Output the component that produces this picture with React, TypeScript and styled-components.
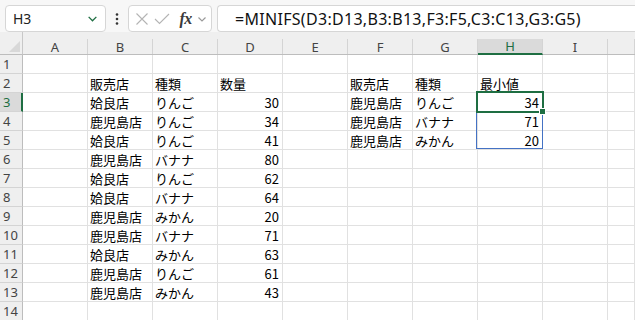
import React, { FC } from 'react';
import styled, { createGlobalStyle, css } from 'styled-components';

const GlobalStyle = createGlobalStyle`
  html, body {
    margin: 0;
    padding: 0;
    background: #ffffff;
    overflow: hidden;
  }
`;

const CELL_FONT = `"Noto Sans CJK JP", "Noto Sans", sans-serif`;
const UI_FONT = `"Noto Sans", "Liberation Sans", sans-serif`;
const GREEN = '#1e6e42';

const COLS = ['A', 'B', 'C', 'D', 'E', 'F', 'G', 'H', 'I', ''];
const ACTIVE_COL = 'H';
const ACTIVE_ROW = 3;
const SPILL_ROWS = 3;

type Cell = { text: string; num?: boolean };

const data: Record<number, Record<string, Cell>> = {
  2: {
    B: { text: '販売店' }, C: { text: '種類' }, D: { text: '数量' },
    F: { text: '販売店' }, G: { text: '種類' }, H: { text: '最小値' },
  },
  3: {
    B: { text: '姶良店' }, C: { text: 'りんご' }, D: { text: '30', num: true },
    F: { text: '鹿児島店' }, G: { text: 'りんご' }, H: { text: '34', num: true },
  },
  4: {
    B: { text: '鹿児島店' }, C: { text: 'りんご' }, D: { text: '34', num: true },
    F: { text: '鹿児島店' }, G: { text: 'バナナ' }, H: { text: '71', num: true },
  },
  5: {
    B: { text: '姶良店' }, C: { text: 'りんご' }, D: { text: '41', num: true },
    F: { text: '鹿児島店' }, G: { text: 'みかん' }, H: { text: '20', num: true },
  },
  6: { B: { text: '鹿児島店' }, C: { text: 'バナナ' }, D: { text: '80', num: true } },
  7: { B: { text: '姶良店' }, C: { text: 'りんご' }, D: { text: '62', num: true } },
  8: { B: { text: '姶良店' }, C: { text: 'バナナ' }, D: { text: '64', num: true } },
  9: { B: { text: '鹿児島店' }, C: { text: 'みかん' }, D: { text: '20', num: true } },
  10: { B: { text: '鹿児島店' }, C: { text: 'バナナ' }, D: { text: '71', num: true } },
  11: { B: { text: '姶良店' }, C: { text: 'みかん' }, D: { text: '63', num: true } },
  12: { B: { text: '鹿児島店' }, C: { text: 'りんご' }, D: { text: '61', num: true } },
  13: { B: { text: '鹿児島店' }, C: { text: 'みかん' }, D: { text: '43', num: true } },
};

const ROWS = Array.from({ length: 14 }, (_, i) => i + 1);

/* ---------- formula bar ---------- */

const Toolbar = styled.div`
  height: 32px;
  box-sizing: border-box;
  padding: 5px 0 0 5px;
  background: #f7f7f7;
  display: flex;
  align-items: flex-start;
  overflow: hidden;
`;

const Box = styled.div`
  height: 27px;
  box-sizing: border-box;
  background: #ffffff;
  border: 1px solid #d6d6d6;
  border-radius: 4px;
  display: flex;
  align-items: center;
`;

const NameBox = styled(Box)`
  width: 101px;
  padding: 0 7px 0 7px;
  justify-content: space-between;
  font-family: ${UI_FONT};
  font-size: 14px;
  color: #222;
`;

const Dots = styled.div`
  width: 22px;
  height: 27px;
  display: flex;
  align-items: center;
  justify-content: center;
`;

const FxBox = styled(Box)`
  width: 84px;
  padding: 0 4px 0 6px;
  justify-content: space-between;
`;

const FxLabel = styled.span`
  font-family: "Liberation Serif", "DejaVu Serif", serif;
  font-style: italic;
  font-weight: bold;
  font-size: 16px;
  color: #3a3a3a;
  margin-left: 4px;
  letter-spacing: -0.5px;
`;

const FormulaBox = styled(Box)`
  flex: 1;
  margin-left: 5px;
  border-right: none;
  border-radius: 4px 0 0 4px;
  padding-left: 17px;
  font-family: ${UI_FONT};
  font-size: 16px;
  letter-spacing: 0.3px;
  color: #111;
  white-space: nowrap;
`;

const Chevron: FC<{ color: string; size?: number }> = ({ color, size = 10 }) => (
  <svg width={size} height={size} viewBox="0 0 10 10">
    <path d="M1.5 3.5 L5 7 L8.5 3.5" fill="none" stroke={color} strokeWidth="1.2" />
  </svg>
);

/* ---------- sheet ---------- */

const Sheet = styled.div`
  display: grid;
  grid-template-columns: 23px repeat(9, 65px) 1fr;
  grid-template-rows: 23px repeat(14, 19px);
  background: #ffffff;
`;

const Corner = styled.div`
  background: #efefef;
  border-right: 1px solid #c8c8c8;
  border-bottom: 1px solid #bdbdbd;
  display: flex;
  align-items: flex-end;
  justify-content: flex-end;
  padding: 0 2px 2px 0;
`;

const ColHeader = styled.div`
  background: #efefef;
  border-bottom: 1px solid #bdbdbd;
  display: flex;
  align-items: flex-end;
`;

const ColLabel = styled.div<{ $active: boolean }>`
  flex: 1;
  height: 15px;
  box-sizing: border-box;
  border-right: 1px solid #d4d4d4;
  display: flex;
  align-items: center;
  justify-content: center;
  font-family: ${UI_FONT};
  font-size: 13px;
  color: #444;
  ${(p) =>
    p.$active &&
    css`
      background: #dadada;
      color: ${GREEN};
      border-bottom: 2px solid ${GREEN};
      margin-bottom: -1px;
      height: 16px;
    `}
`;

const RowHeader = styled.div<{ $active: boolean }>`
  background: #efefef;
  border-right: 1px solid #bdbdbd;
  border-bottom: 1px solid #d4d4d4;
  box-sizing: border-box;
  display: flex;
  align-items: center;
  padding-left: 3px;
  font-family: ${UI_FONT};
  font-size: 13px;
  color: #444;
  ${(p) =>
    p.$active &&
    css`
      background: #dadada;
      color: ${GREEN};
      border-right: 2px solid ${GREEN};
    `}
`;

const GridCell = styled.div<{ $num?: boolean; $active?: boolean }>`
  border-right: 1px solid #e1e1e1;
  border-bottom: 1px solid #e1e1e1;
  box-sizing: border-box;
  display: flex;
  align-items: center;
  justify-content: ${(p) => (p.$num ? 'flex-end' : 'flex-start')};
  padding: 0 3px 0 2px;
  font-family: ${CELL_FONT};
  font-size: 13px;
  color: #000;
  white-space: nowrap;
  overflow: hidden;
  ${(p) =>
    p.$active &&
    css`
      position: relative;
      overflow: visible;
      z-index: 2;
    `}
`;

/* blue border of the spilled range, drawn over the cells below */
const SpillRange = styled.div<{ $rows: number }>`
  position: absolute;
  left: -2px;
  top: -2px;
  width: 67px;
  height: ${(p) => p.$rows * 19 + 1}px;
  border: 1px solid #4472c4;
  box-sizing: border-box;
  pointer-events: none;
`;

const ActiveFrame = styled.div`
  position: absolute;
  left: -2px;
  top: -2px;
  right: -2px;
  bottom: -2px;
  border: 2px solid ${GREEN};
  pointer-events: none;
`;

const FillHandle = styled.div`
  position: absolute;
  right: -4px;
  bottom: -4px;
  width: 5px;
  height: 5px;
  background: ${GREEN};
  border: 1px solid #ffffff;
`;

export default function App() {
  return (
    <>
      <GlobalStyle />
      <Toolbar>
        <NameBox>
          <span>H3</span>
          <Chevron color={GREEN} size={11} />
        </NameBox>
        <Dots>
          <svg width="4" height="14" viewBox="0 0 4 14">
            <circle cx="2" cy="2.5" r="1.3" fill="#333" />
            <circle cx="2" cy="7" r="1.3" fill="#333" />
            <circle cx="2" cy="11.5" r="1.3" fill="#333" />
          </svg>
        </Dots>
        <FxBox>
          <svg width="14" height="14" viewBox="0 0 14 14">
            <path d="M1.5 1.5 L12.5 12.5 M12.5 1.5 L1.5 12.5" stroke="#b4b4b4" strokeWidth="1.1" fill="none" />
          </svg>
          <svg width="16" height="14" viewBox="0 0 16 14">
            <path d="M1 7 L5.5 11.5 L15 2" stroke="#b4b4b4" strokeWidth="1.1" fill="none" />
          </svg>
          <FxLabel>fx</FxLabel>
          <Chevron color="#9a9a9a" />
        </FxBox>
        <FormulaBox>=MINIFS(D3:D13,B3:B13,F3:F5,C3:C13,G3:G5)</FormulaBox>
      </Toolbar>
      <Sheet>
        <Corner>
          <svg width="11" height="11" viewBox="0 0 11 11">
            <path d="M11 0 L11 11 L0 11 Z" fill="#d8d8d8" />
          </svg>
        </Corner>
        {COLS.map((c, i) => (
          <ColHeader key={`h${i}`}>
            <ColLabel $active={c === ACTIVE_COL}>{c}</ColLabel>
          </ColHeader>
        ))}
        {ROWS.map((r) => (
          <React.Fragment key={r}>
            <RowHeader $active={r === ACTIVE_ROW}>{r}</RowHeader>
            {COLS.map((c, i) => {
              const cell = data[r]?.[c];
              const active = r === ACTIVE_ROW && c === ACTIVE_COL;
              return (
                <GridCell key={`${r}-${i}`} $num={cell?.num} $active={active}>
                  {cell?.text}
                  {active && (
                    <>
                      <SpillRange $rows={SPILL_ROWS} />
                      <ActiveFrame>
                        <FillHandle />
                      </ActiveFrame>
                    </>
                  )}
                </GridCell>
              );
            })}
          </React.Fragment>
        ))}
      </Sheet>
    </>
  );
}
